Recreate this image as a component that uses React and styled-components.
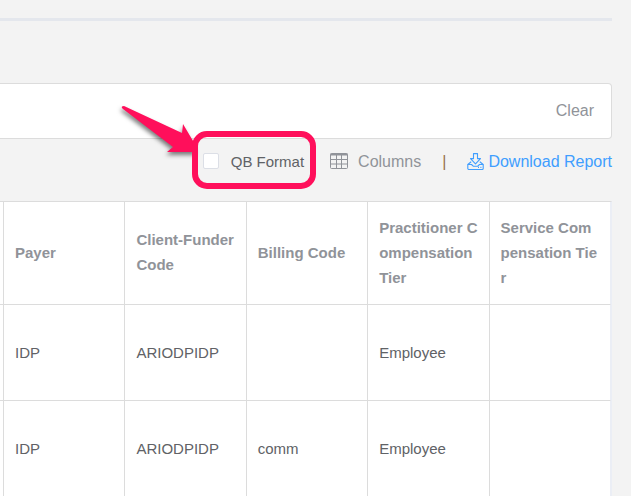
import React, { useState } from 'react';
import styled, { createGlobalStyle } from 'styled-components'

const GlobalStyle = createGlobalStyle`
 *{
    box-sizing: border-box;
 }
 body{
    margin:0;
    overflow:hidden;
    background-color: #f3f3f3;
    font-family: 'Liberation Sans', Arial, sans-serif;
    font-size: 16px;
    line-height: 25px;
    color: #606266;
 }`

const StyledPage = styled.main`
 padding: 18px 19px 0 0;
 `

const StyledDivider = styled.hr`
 height: 3px;
 margin: 0 0 62px;
 border: none;
 background-color: #e4e7ed;
 `

const StyledFilterBar = styled.section`
 display:flex;
 align-items:center;
 justify-content: flex-end;
 height: 56px;
 padding: 0 17px 2px 0;
 background-color: #ffffff;
 border: 1px solid #dcdcdc;
 border-left: none;
 border-radius: 0 4px 4px 0;
 `

const StyledTextButton = styled.button`
 display:flex;
 align-items:center;
 gap: 10px;
 padding:0;
 border:none;
 background:none;
 cursor:pointer;
 font: inherit;
 color: #909399;
 `

const StyledToolbar = styled.div`
 display:flex;
 align-items:center;
 justify-content: flex-end;
 height: 44px;
 margin-bottom: 18px;
 `

const StyledFormat = styled.div`
 position:relative;
 margin-right: 26px;
 label{
    display:flex;
    align-items:center;
    gap: 12px;
    font-size: 15px;
    cursor:pointer;
 }
 input{
    appearance:none;
    width: 16px;
    height: 16px;
    margin:0;
    background-color: #ffffff;
    border: 1px solid #dcdfe6;
    border-radius: 2px;
    &:checked{
        background-color: #409eff;
    }
 }
 `

/* pink frame drawn over the option */
const StyledHighlight = styled.span`
 position:absolute;
 top: -18px;
 bottom: -15px;
 left: -11px;
 right: -12px;
 border: 6px solid #ff0f5b;
 border-radius: 15px;
 pointer-events:none;
 `

const StyledArrow = styled.svg`
 position:absolute;
 top: -44px;
 left: -82px;
 pointer-events:none;
 filter: drop-shadow(-1px 3px 2px rgba(0, 0, 0, 0.5));
 `

const StyledSeparator = styled.span`
 margin: 0 21px;
 color: #96704c;
 `

const StyledDownload = styled.a`
 display:flex;
 align-items:center;
 gap: 4px;
 color: #409eff;
 text-decoration:none;
 `

const StyledTable = styled.table`
 width:100%;
 table-layout: fixed;
 border-collapse: separate;
 border-spacing: 0;
 background-color: #ffffff;
 border-top: 1px solid #dcdcdc;
 border-right: 1px solid #ebeef5;
 font-size: 15px;
 .edge{
    width: 4px;
 }
 th, td{
    padding: 0 11px;
    text-align:left;
    vertical-align:middle;
    word-break: break-all;
    border-right: 1px solid #dcdcdc;
    border-bottom: 1px solid #dcdcdc;
    &:first-child{
        padding:0;
    }
    &:last-child{
        border-right-color: #ebeef5;
    }
 }
 th{
    height: 103px;
    padding-bottom: 2px;
    font-weight: 700;
    color: #909399;
 }
 td{
    height: 96px;
 }
 `

const columns = [
    "Payer",
    "Client-Funder Code",
    "Billing Code",
    "Practitioner Compensation Tier",
    "Service Compensation Tier",
]

const rows = [
    ["IDP", "ARIODPIDP", "", "Employee", ""],
    ["IDP", "ARIODPIDP", "comm", "Employee", ""],
]

const GridIcon = () => (
    <svg width="18" height="17" viewBox="0 0 18 17" fill="none" stroke="#909399" aria-hidden="true">
        <rect x="0.5" y="0.5" width="17" height="15" rx="1" />
        <path d="M0.5 1.5h17" strokeWidth="2" />
        <path d="M1 6.5h16M1 11h16M6.5 2v13.5M11.5 2v13.5" />
    </svg>
)

const DownloadIcon = () => (
    <svg width="17" height="17" viewBox="0 0 17 17" fill="none" stroke="#409eff" strokeWidth="1.1" strokeLinejoin="round" aria-hidden="true">
        <path d="M6.5 0.6h4v5h3l-5 5.2l-5 -5.2h3z" />
        <path d="M4.2 8.8L0.8 11.5v4a1 1 0 0 0 1 1h13.4a1 1 0 0 0 1-1v-4L12.8 8.8" />
        <path d="M0.8 11.5h3.7l2 1.8h4l2-1.8h3.7M11 14.4h1M13.4 14.4h1" />
    </svg>
)

const App = () => {
    const [qbFormat,setQbFormat] = useState(false)

  return (
    <StyledPage>
        <GlobalStyle />
        <StyledDivider />
        <StyledFilterBar>
            <StyledTextButton type="button">Clear</StyledTextButton>
        </StyledFilterBar>
        <StyledToolbar>
            <StyledFormat>
                <label htmlFor="qb-format">
                    <input
                        id="qb-format"
                        type="checkbox"
                        checked={qbFormat}
                        onChange={(e) => setQbFormat(e.target.checked)}
                    />
                    QB Format
                </label>
                <StyledArrow width="84" height="56" viewBox="0 0 84 56" aria-hidden="true">
                    <path d="M1 3Q0 1 3 1L61 28L62 19L75 41L75 47L46 47L52 42L2 4Z" fill="#ff0f5b" />
                </StyledArrow>
                <StyledHighlight />
            </StyledFormat>
            <StyledTextButton type="button">
                <GridIcon />
                Columns
            </StyledTextButton>
            <StyledSeparator>|</StyledSeparator>
            <StyledDownload href="#download">
                <DownloadIcon />
                Download Report
            </StyledDownload>
        </StyledToolbar>
        <StyledTable>
            <colgroup>
                <col className="edge" />
                {columns.map((name) => <col key={name} />)}
            </colgroup>
            <thead>
                <tr>
                    <th></th>
                    {columns.map((name) => <th key={name} scope="col">{name}</th>)}
                </tr>
            </thead>
            <tbody>
                {rows.map((row, i) => (
                    <tr key={i}>
                        <td></td>
                        {row.map((value, j) => <td key={j}>{value}</td>)}
                    </tr>
                ))}
            </tbody>
        </StyledTable>
    </StyledPage>
  )
}

export default App
